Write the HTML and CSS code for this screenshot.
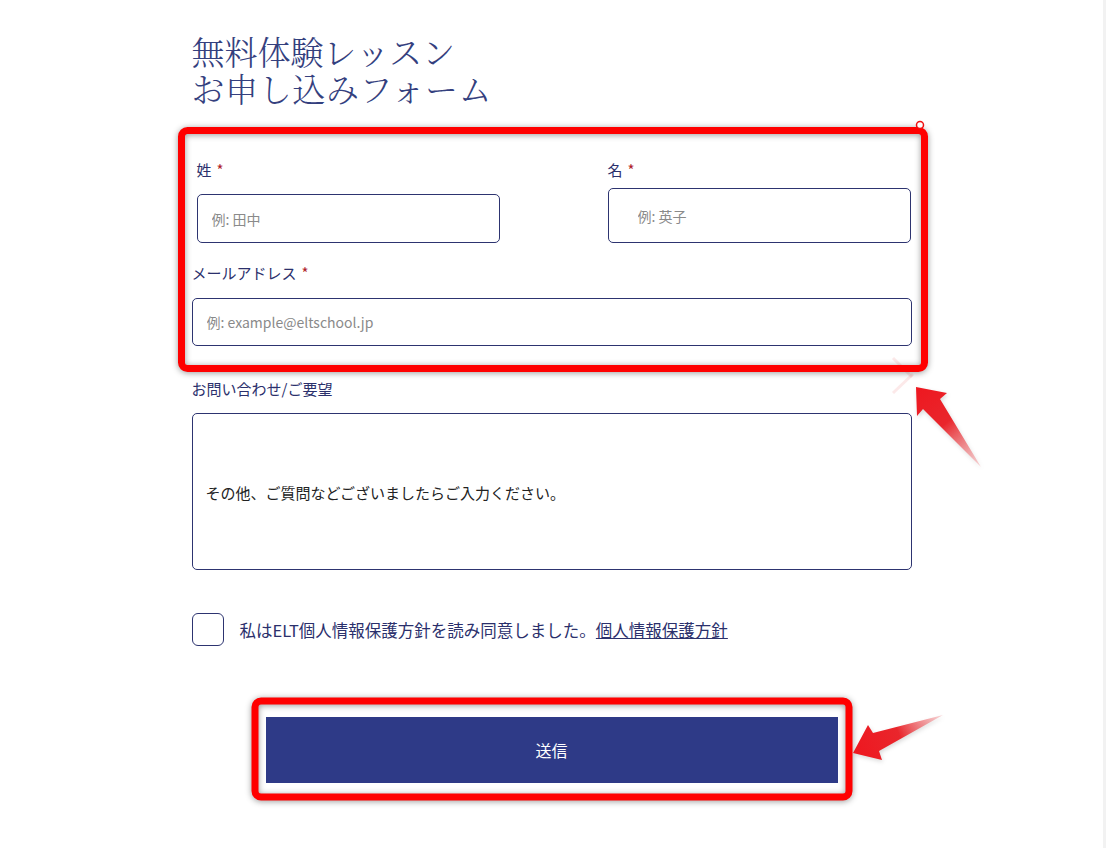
FILE: index.html
```html
<!DOCTYPE html>
<html lang="ja">
<head>
  <meta charset="UTF-8">
  <title>無料体験レッスン お申し込みフォーム</title>
  <link rel="stylesheet" href="styles.css">
</head>
<body>

  <div class="form-wrap">
    <h1 class="title"><span class="title-line">無料体験レッスン</span><span class="title-line">お申し込みフォーム</span></h1>

    <form class="trial-form" onsubmit="return false;">
      <div class="name-row">
        <div class="name-col">
          <label class="field-label" for="last-name">姓<span class="req">*</span></label>
          <input type="text" id="last-name" class="text-input last" placeholder="例: 田中">
        </div>
        <div class="name-col">
          <label class="field-label" for="first-name">名<span class="req">*</span></label>
          <input type="text" id="first-name" class="text-input first" placeholder="例: 英子">
        </div>
      </div>

      <label class="field-label mail-label" for="email">メールアドレス<span class="req">*</span></label>
      <input type="email" id="email" class="text-input mail" placeholder="例: example@eltschool.jp">

      <label class="field-label note-label" for="message">お問い合わせ/ご要望</label>
      <textarea id="message" class="note" placeholder="その他、ご質問などございましたらご入力ください。"></textarea>

      <div class="agree-row">
        <input type="checkbox" id="agree" class="agree-box">
        <label for="agree" class="agree-text">私はELT個人情報保護方針を読み同意しました。<a href="#" class="policy-link">個人情報保護方針</a></label>
      </div>

      <button type="submit" class="send-btn">送信</button>
    </form>
  </div>

  <!-- annotation marks drawn over the page -->
  <svg class="marks" width="1106" height="848" viewBox="0 0 1106 848">
    <defs>
      <linearGradient id="arrow-up" gradientUnits="userSpaceOnUse" x1="916" y1="390" x2="980" y2="466">
        <stop offset="0" stop-color="#ee1820"/>
        <stop offset="0.45" stop-color="#e9262c"/>
        <stop offset="1" stop-color="#f3b3b5" stop-opacity="0.6"/>
      </linearGradient>
      <linearGradient id="arrow-left" gradientUnits="userSpaceOnUse" x1="856" y1="752" x2="942" y2="716">
        <stop offset="0" stop-color="#ee1820"/>
        <stop offset="0.5" stop-color="#e9262c"/>
        <stop offset="1" stop-color="#f3b3b5" stop-opacity="0.6"/>
      </linearGradient>
    </defs>

    <line class="ghost" x1="893" y1="393" x2="913" y2="374"/>
    <line class="ghost" x1="893" y1="358" x2="912" y2="377"/>

    <rect class="box" x="181.5" y="130.5" width="743" height="238" rx="6"/>
    <circle class="ring" cx="920" cy="125" r="3.5"/>
    <rect class="box" x="255" y="701" width="594" height="96" rx="6"/>

    <polygon class="arrow" fill="url(#arrow-up)" points="916,387 947,393 940,399 981,467 923,409 917,416"/>
    <polygon class="arrow" fill="url(#arrow-left)" points="853,753 868,725 873,733 943,715 879,751 882,760"/>
  </svg>

</body>
</html>
```

FILE: styles.css
```css
body {
  margin: 0;
  position: relative;
  min-height: 848px;
  background: #fff;
  border-right: 3px solid #f2f2f2;
  color: #2b306c;
  font-family: "Noto Sans CJK JP", "Noto Sans", sans-serif;
}

.form-wrap {
  width: 720px;
  margin: 0 auto;
  padding-top: 32px;
}

.title {
  margin: 0;
  font-family: "Noto Serif CJK JP", "Noto Sans CJK JP", serif;
  font-weight: 300;
  font-size: 33px;
  line-height: 37px;
  color: #34407e;
}

.title-line {
  display: block;
  height: 37px;
}

.title-line + .title-line {
  letter-spacing: 0.6px;
}

.trial-form {
  display: flex;
  flex-direction: column;
}

.name-row {
  display: grid;
  grid-template-columns: 303px 303px;
  justify-content: space-between;
  margin: 54px 1px 0 5px;
}

.field-label {
  display: block;
  font-size: 15px;
  line-height: 20px;
}

.req {
  color: #b01e2c;
  margin-left: 5px;
}

.text-input {
  display: block;
  width: 100%;
  box-sizing: border-box;
  border: 1px solid #2d3470;
  border-radius: 5px;
  padding: 0 14px;
  background: #fff;
  color: #333;
  font-family: inherit;
  font-size: 14px;
}

.text-input::placeholder {
  color: #8a8a8a;
}

.text-input.last {
  height: 49px;
  margin-top: 14px;
}

.text-input.first {
  height: 55px;
  margin-top: 8px;
  padding-left: 29px;
}

.mail-label {
  margin-top: 20px;
}

.text-input.mail {
  height: 48px;
  margin-top: 15px;
}

.note-label {
  margin-top: 33px;
}

.note {
  display: block;
  width: 100%;
  height: 157px;
  box-sizing: border-box;
  margin-top: 14px;
  padding: 69px 13px 0;
  border: 1px solid #2d3470;
  border-radius: 5px;
  resize: none;
  font-family: inherit;
  font-size: 15px;
  line-height: 20px;
}

.note::placeholder {
  color: #222;
}

.agree-row {
  display: flex;
  align-items: center;
  gap: 16px;
  height: 33px;
  margin-top: 43px;
}

.agree-box {
  appearance: none;
  width: 32px;
  height: 33px;
  margin: 0;
  border: 1px solid #2d3470;
  border-radius: 6px;
  background: #fff;
}

.agree-text {
  font-size: 16.5px;
  line-height: 20px;
}

.policy-link {
  color: #2b306c;
  text-decoration: underline;
}

.send-btn {
  display: block;
  width: 572px;
  height: 66px;
  margin: 71px auto 0;
  border: none;
  background: #2e3a87;
  color: #fff;
  font-family: inherit;
  font-size: 16px;
  cursor: pointer;
}

/* annotation overlay */
.marks {
  position: absolute;
  top: 0;
  left: 0;
  pointer-events: none;
}

.box {
  fill: none;
  stroke: #ff0000;
  stroke-width: 7;
  filter: drop-shadow(0 1px 3px rgba(0, 0, 0, 0.4));
}

.ring {
  fill: #fff;
  stroke: #f01010;
  stroke-width: 1.5;
}

.arrow {
  filter: drop-shadow(1px 2px 2px rgba(0, 0, 0, 0.15));
}

.ghost {
  stroke: #f4a9ab;
  stroke-width: 3;
  opacity: 0.25;
}
```
